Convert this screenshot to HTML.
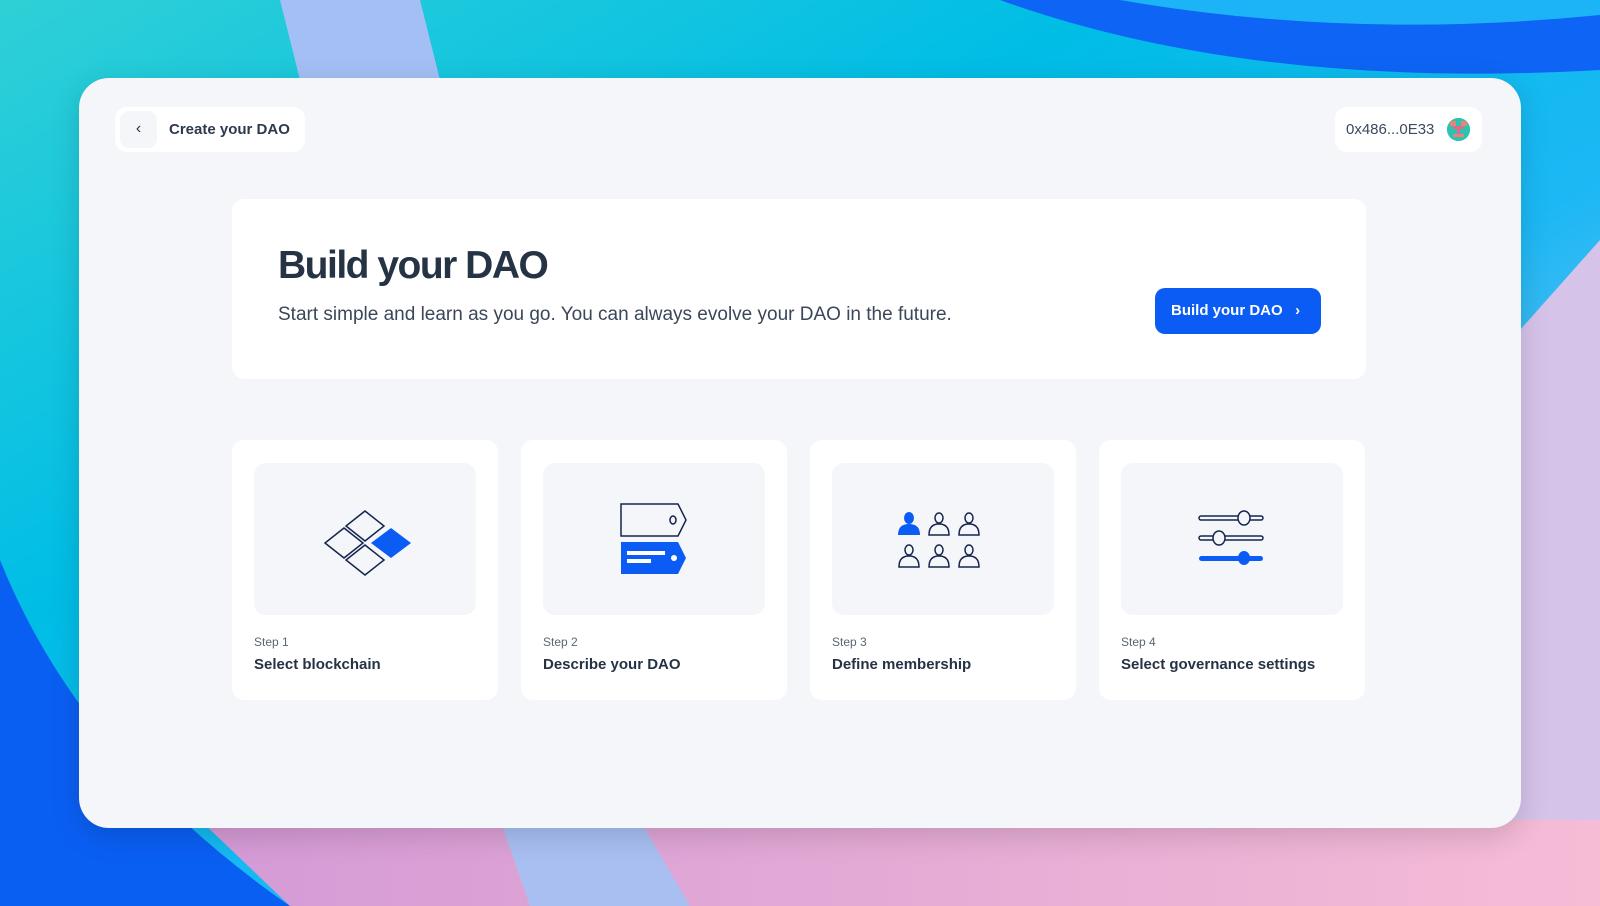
<!DOCTYPE html>
<html><head><meta charset="utf-8"><style>
*{margin:0;padding:0;box-sizing:border-box}
body{width:1600px;height:906px;overflow:hidden;position:relative;font-family:"Liberation Sans",sans-serif;color:#1f2b3d}
.bg{position:absolute;inset:0}
.card{position:absolute;left:79px;top:78px;width:1442px;height:750px;background:#f5f6fa;border-radius:30px;box-shadow:0 8px 30px rgba(0,0,0,.15)}
.pill{position:absolute;background:#fff;border-radius:12px}
.back{left:36px;top:29px;width:190px;height:45px}
.back .ic{position:absolute;left:5px;top:4px;width:37px;height:37px;background:#f5f6fa;border-radius:9px;font-size:16px;color:#333;text-align:center;line-height:36px}
.back span{position:absolute;left:54px;top:14px;font-size:15px;font-weight:bold;color:#2d3a4d}
.wallet{left:1256px;top:29px;width:147px;height:45px}
.wallet span{position:absolute;left:11px;top:14px;font-size:15px;color:#3c4a5e}
.av{position:absolute;left:112px;top:11px;width:23px;height:23px;border-radius:50%;background:#25c6b8;overflow:hidden}
.hero{position:absolute;left:153px;top:121px;width:1134px;height:180px;background:#fff;border-radius:12px}
.hero h1{position:absolute;left:46px;top:45px;font-size:39px;font-weight:bold;color:#263345;letter-spacing:-1.5px}
.hero p{position:absolute;left:46px;top:105px;font-size:19px;color:#3b4759}
.btn{position:absolute;left:923px;top:89px;width:166px;height:46px;background:#0a5cf5;border-radius:10px;color:#fff;font-weight:bold;font-size:15px;line-height:46px;padding-left:16px}
.step{position:absolute;top:362px;width:266px;height:260px;background:#fff;border-radius:12px}
.step .img{position:absolute;left:22px;top:23px;width:222px;height:152px;background:#f5f6fa;border-radius:12px}
.step .img svg{position:absolute;left:0;top:0}
.step .l{position:absolute;left:22px;top:195px;font-size:12px;color:#5a6575}
.step .t{position:absolute;left:22px;top:216px;font-size:15px;font-weight:bold;color:#263345}
</style></head><body>
<svg class="bg" width="1600" height="906" viewBox="0 0 1600 906">
<defs>
<linearGradient id="g1" x1="0" y1="0" x2="1" y2="1"><stop offset="0" stop-color="#2fd0d6"/><stop offset=".35" stop-color="#00bde6"/><stop offset=".6" stop-color="#1cb8f5"/><stop offset="1" stop-color="#c9c4ea"/></linearGradient>
<linearGradient id="g2" x1="0" y1="0" x2="1" y2="0"><stop offset="0" stop-color="#d49ad6"/><stop offset="1" stop-color="#f6bcd6"/></linearGradient>
</defs>
<rect width="1600" height="906" fill="url(#g1)"/>
<path d="M1000 0 Q1250 90 1600 70 L1600 0 Z" fill="#0e64f4"/>
<path d="M1120 0 Q1350 40 1600 15 L1600 0 Z" fill="#1cb4f7"/>
<path d="M1520 330 L1600 240 L1600 906 L1460 906 Z" fill="#d5c3ea"/>
<path d="M280 0 L420 0 L440 80 L300 80 Z" fill="#a4bff5"/>
<path d="M0 560 Q80 760 290 906 L0 906 Z" fill="#0a5ff3"/>
<path d="M200 820 L1600 820 L1600 906 L290 906 Z" fill="url(#g2)"/>
<path d="M500 820 L640 820 L690 906 L530 906 Z" fill="#a9bff2"/>
</svg>
<div class="card">
 <div class="pill back"><div class="ic">&#8249;</div><span>Create your DAO</span></div>
 <div class="pill wallet"><span>0x486...0E33</span><div class="av"><svg width="23" height="23"><rect x="0" y="0" width="23" height="23" fill="#2cc4b0"/><rect x="3" y="3" width="6" height="5" fill="#e8847a"/><rect x="14" y="3" width="6" height="5" fill="#e8847a"/><rect x="6" y="8" width="11" height="3" fill="#e06a8a"/><rect x="10" y="11" width="3" height="7" fill="#e06a8a"/><rect x="6" y="16" width="11" height="3" fill="#e8847a"/></svg></div></div>
 <div class="hero">
  <h1>Build your DAO</h1>
  <p>Start simple and learn as you go. You can always evolve your DAO in the future.</p>
  <div class="btn">Build your DAO &nbsp;&nbsp;&#8250;</div>
 </div>
 <div class="step" style="left:153px"><div class="img"><svg width="222" height="152">
  <g fill="none" stroke="#15254d" stroke-width="1.5">
   <path d="M111 48 L130 63 L111 78 L92 63 Z"/><path d="M90 65 L109 80 L90 95 L71 80 Z"/><path d="M111 82 L130 97 L111 112 L92 97 Z"/></g>
  <path d="M137 65 L157 80 L137 95 L117 80 Z" fill="#0a5cf5"/></svg></div>
  <div class="l">Step 1</div><div class="t">Select blockchain</div></div>
 <div class="step" style="left:442px"><div class="img"><svg width="222" height="152">
  <path d="M78 41 H135 L143 57 L135 73 H78 Z" fill="none" stroke="#15254d" stroke-width="1.5"/><ellipse cx="130" cy="57" rx="3" ry="4" fill="none" stroke="#15254d" stroke-width="1.5"/>
  <path d="M78 79 H135 L143 95 L135 111 H78 Z" fill="#0a5cf5"/><rect x="84" y="88" width="38" height="4" fill="#fff"/><rect x="84" y="96" width="24" height="4" fill="#fff"/><circle cx="131" cy="95" r="3" fill="#fff"/></svg></div>
  <div class="l">Step 2</div><div class="t">Describe your DAO</div></div>
 <div class="step" style="left:731px"><div class="img"><svg width="222" height="152">
  <g fill="none" stroke="#15254d" stroke-width="1.5">
   <ellipse cx="107" cy="55" rx="4" ry="5"/><path d="M97 72 Q97 61 107 61 Q117 61 117 72 Z"/>
   <ellipse cx="137" cy="55" rx="4" ry="5"/><path d="M127 72 Q127 61 137 61 Q147 61 147 72 Z"/>
   <ellipse cx="77" cy="87" rx="4" ry="5"/><path d="M67 104 Q67 93 77 93 Q87 93 87 104 Z"/>
   <ellipse cx="107" cy="87" rx="4" ry="5"/><path d="M97 104 Q97 93 107 93 Q117 93 117 104 Z"/>
   <ellipse cx="137" cy="87" rx="4" ry="5"/><path d="M127 104 Q127 93 137 93 Q147 93 147 104 Z"/></g>
  <g fill="#0a5cf5"><ellipse cx="77" cy="55" rx="5" ry="6"/><path d="M66 72 Q66 61 77 61 Q88 61 88 72 Z"/></g></svg></div>
  <div class="l">Step 3</div><div class="t">Define membership</div></div>
 <div class="step" style="left:1020px"><div class="img"><svg width="222" height="152">
  <g fill="none" stroke="#15254d" stroke-width="1.5"><rect x="78" y="53" width="64" height="4" rx="2"/><rect x="78" y="73" width="64" height="4" rx="2"/></g>
  <g fill="#f5f6fa" stroke="#15254d" stroke-width="1.5"><ellipse cx="123" cy="55" rx="6" ry="7"/><ellipse cx="98" cy="75" rx="6" ry="7"/></g>
  <rect x="78" y="93" width="64" height="5" rx="2.5" fill="#0a5cf5"/><ellipse cx="123" cy="95" rx="6" ry="7" fill="#0a5cf5"/></svg></div>
  <div class="l">Step 4</div><div class="t">Select governance settings</div></div>
</div>
</body></html>
